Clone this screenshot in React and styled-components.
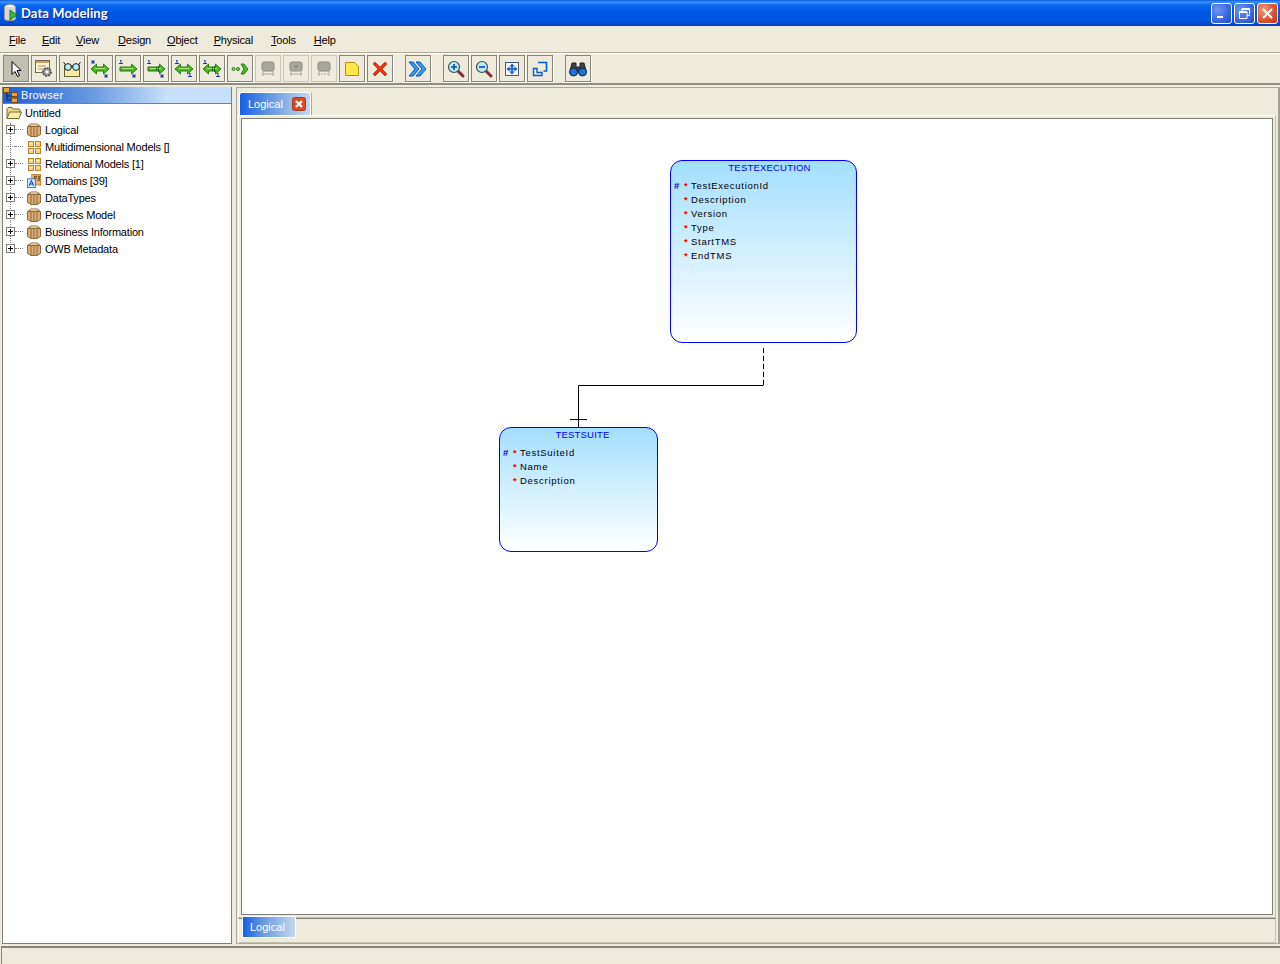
import React from 'react';
import styled, { createGlobalStyle } from 'styled-components';

const Global = createGlobalStyle`
  html, body { margin: 0; padding: 0; background: #efebdc; }
  * { box-sizing: border-box; }
`;

const Window = styled.div`
  width: 1280px;
  height: 964px;
  display: flex;
  flex-direction: column;
  overflow: hidden;
  background: #efebdc;
  font-family: "Liberation Sans", Arial, sans-serif;
  font-size: 11px;
  color: #000;
`;

const TitleBar = styled.div`
  height: 26px;
  flex: none;
  display: flex;
  align-items: center;
  padding: 0 2px 0 3px;
  background: linear-gradient(180deg, #0a5ae0 0, #3d95ff 2px, #0a66f0 5px, #0058e6 12px, #0055e0 20px, #0350d8 23px, #003cc0 26px);
`;

const TitleText = styled.span`
  margin-left: 2px;
  flex: 1;
  color: #fff;
  font-family: "Lato", sans-serif;
  font-weight: bold;
  font-size: 13px;
  letter-spacing: 0.1px;
  text-shadow: 1px 1px 0 #0f2a90;
`;

const CaptionButton = styled.div`
  width: 21px;
  height: 21px;
  margin-left: 2px;
  border: 1px solid #fff;
  border-radius: 3px;
  display: flex;
  align-items: center;
  justify-content: center;
  background: ${p => p.$close
    ? 'radial-gradient(circle at 30% 30%, #f09a80, #d8502c 60%, #c23a18)'
    : 'radial-gradient(circle at 30% 30%, #6f94f0, #3a66e0 60%, #2148c8)'};
`;

const MenuBar = styled.div`
  height: 27px;
  flex: none;
  display: flex;
  align-items: center;
  padding: 2px 0 0 9px;
  border-bottom: 1px solid #aca899;
  font-size: 11px;
  letter-spacing: -0.2px;
`;

const MenuItem = styled.span`
  margin-right: ${p => p.$gap}px;
  u { text-decoration: underline; }
`;

const ToolBar = styled.div`
  height: 32px;
  flex: none;
  display: flex;
  align-items: flex-start;
  padding: 1px 0 0 3px;
  border-bottom: 2px solid #8f8d80;
  border-top: 1px solid #fff;
`;

const ToolButton = styled.div`
  width: 26px;
  height: 27px;
  margin-right: 2px;
  margin-left: ${p => p.$space || 0}px;
  display: flex;
  align-items: center;
  justify-content: center;
  border: 1px solid ${p => (p.$off ? '#c9c7b8' : '#86867c')};
  box-shadow: 1px 1px 0 ${p => (p.$off ? 'transparent' : '#fff')};
  background: ${p => (p.$on ? '#c2c0b2' : 'transparent')};
`;

const Main = styled.div`
  flex: 1;
  min-height: 0;
  display: flex;
  padding: 2px 0 2px 2px;
`;

const Sidebar = styled.div`
  width: 230px;
  flex: none;
  display: flex;
  flex-direction: column;
  border: 1px solid #808078;
  border-width: 0 1px 1px 1px;
  background: #fff;
`;

const SidebarHead = styled.div`
  height: 17px;
  flex: none;
  display: flex;
  align-items: center;
  gap: 2px;
  color: #fff;
  background: linear-gradient(90deg, #1c5fd8 0, #6b9ce0 40%, #c6e0fb 72%, #c6e0fb 100%);
  border-bottom: 1px solid #808078;
  font-size: 11px;
  letter-spacing: 0.3px;
`;

const Tree = styled.div`
  position: relative;
  flex: 1;
  letter-spacing: -0.2px;
  &::before {
    content: '';
    position: absolute;
    left: 7px;
    top: 19px;
    height: 128px;
    border-left: 1px dotted #808080;
  }
`;

const RootRow = styled.div`
  height: 17px;
  display: flex;
  align-items: center;
  gap: 3px;
  padding-left: 3px;
`;

const TreeRow = styled.div`
  position: relative;
  height: 17px;
  display: flex;
  align-items: center;
  padding-left: 3px;
`;

const Expander = styled.span`
  width: 9px;
  height: 9px;
  flex: none;
  position: relative;
  z-index: 1;
  border: 1px solid #808080;
  background: #fff;
  &::before { content: ''; position: absolute; left: 1px; top: 3px; width: 5px; height: 1px; background: #000; }
  &::after { content: ''; position: absolute; left: 3px; top: 1px; width: 1px; height: 5px; background: #000; }
`;

const LeafDots = styled.span`
  width: 9px;
  flex: none;
  border-top: 1px dotted #808080;
`;

const Dots = styled.span`
  width: 8px;
  flex: none;
  margin-right: 4px;
  border-top: 1px dotted #808080;
`;

const IconSlot = styled.span`
  width: 14px;
  height: 16px;
  flex: none;
  display: flex;
  align-items: center;
  justify-content: center;
`;

const Label = styled.span`
  margin-left: 4px;
  white-space: nowrap;
`;

const Splitter = styled.div`
  width: 4px;
  flex: none;
`;

const Editor = styled.div`
  flex: 1;
  min-width: 0;
  display: flex;
  flex-direction: column;
  border: 1px solid #aca899;
  border-right: 2px solid #a0a094;
  padding-top: 4px;
`;

const TabStrip = styled.div`
  height: 23px;
  flex: none;
  padding-left: 2px;
  display: flex;
`;

const TopTab = styled.div`
  width: 72px;
  height: 23px;
  display: flex;
  align-items: center;
  justify-content: space-between;
  padding: 0 4px 0 8px;
  color: #fff;
  font-size: 11px;
  border-radius: 3px 3px 0 0;
  border: 1px solid #fff;
  border-bottom: 0;
  box-shadow: 1px 0 0 #aca899;
  background: linear-gradient(90deg, #1560e4 0, #6a9be0 45%, #c4d8ee 100%);
`;

const Pane = styled.div`
  flex: 1;
  min-height: 0;
  margin: 0 2px 0 1px;
  padding: 2px;
  border: 1px solid #c4c2b2;
  border-top-color: #fff;
  border-left-color: #fff;
  display: flex;
`;

const Canvas = styled.div`
  position: relative;
  flex: 1;
  background: #fff;
  border: 1px solid #808078;
`;

const Link = styled.svg`
  position: absolute;
  left: 0;
  top: 0;
  width: 100%;
  height: 100%;
  pointer-events: none;
`;

const Entity = styled.div`
  position: absolute;
  left: ${p => p.$x}px;
  top: ${p => p.$y}px;
  width: ${p => p.$w}px;
  height: ${p => p.$h}px;
  border: 1px solid #0000ff;
  border-radius: 12px;
  background: linear-gradient(180deg, #a3dfff 0, #ffffff 100%);
  font-family: "Liberation Sans", Arial, sans-serif;
  font-size: 9.5px;
  letter-spacing: 0.72px;
`;

const EntityName = styled.div`
  color: #0000ff;
  height: 14px;
  line-height: 14px;
  letter-spacing: 0.2px;
  margin: 0 0 4px ${p => p.$shift}px;
  text-align: center;
`;

const Attr = styled.div`
  height: 14px;
  line-height: 14px;
  display: flex;
  padding-left: 3px;
  white-space: nowrap;
`;

const Hash = styled.span`
  width: 10px;
  color: #0000cc;
  font-weight: bold;
  visibility: ${p => (p.$show ? 'visible' : 'hidden')};
`;

const Star = styled.span`
  width: 7px;
  color: #ff0000;
  font-weight: bold;
`;

const BottomStrip = styled.div`
  height: 25px;
  flex: none;
  margin: 0 2px 0 1px;
  padding: 0 0 0 4px;
  border: 1px solid #c4c2b2;
  border-top: 1px solid #808078;
  border-left-color: #fff;
`;

const BottomTab = styled.div`
  width: 52px;
  height: 20px;
  margin-top: -2px;
  padding-left: 7px;
  display: flex;
  align-items: center;
  color: #fff;
  font-size: 11px;
  outline: 1px solid #fff;
  box-shadow: 2px 2px 0 -1px #aca899;
  background: linear-gradient(90deg, #1560e4 0, #6a9be0 40%, #c4d8ee 100%);
`;

const StatusBar = styled.div`
  height: 18px;
  flex: none;
  margin-left: 1px;
  border-top: 2px solid #85857a;
  border-left: 1px solid #85857a;
`;

const Box = () => (
  <svg width="14" height="14" viewBox="0 0 14 14">
    <path d="M.5 3.5 4 1h6l3.5 2.5v8L10 13.5H4L.5 11.5z" fill="#dcae74" stroke="#8d6b3e" />
    <path d="M4 3v10.5M7 3v10.5M10 3v10.5" stroke="#8d6b3e" fill="none" />
    <path d="M1 3.5h12" stroke="#8d6b3e" />
    <path d="M4 2h6" stroke="#f6e2bc" />
  </svg>
);

const Grid = () => (
  <svg width="14" height="14" viewBox="0 0 14 14">
    <g fill="#fbd07e" stroke="#bd8428">
      <rect x="1.5" y="1.5" width="5" height="5" />
      <rect x="8.5" y="1.5" width="5" height="5" />
      <rect x="1.5" y="8.5" width="5" height="5" />
      <rect x="8.5" y="8.5" width="5" height="5" />
    </g>
    <path d="M2.5 3.5h3M9.5 3.5h3M2.5 10.5h3M9.5 10.5h3" stroke="#fff0c8" />
  </svg>
);

const Domain = () => (
  <svg width="16" height="16" viewBox="0 0 16 16">
    <rect x="5.5" y="0.5" width="10" height="12" fill="#f6b26b" stroke="#b87a30" />
    <path d="M8.5 2.5h2v3h-2zM12 2.5h2v5h-2M12 5h2" fill="none" stroke="#553300" />
    <rect x="0.5" y="5.5" width="9" height="10" fill="#d6ecff" stroke="#2a70c8" />
    <path d="M2.5 13.5 5 7.5l2.5 6M3.5 11.5h3" fill="none" stroke="#0a4fc0" strokeWidth="1.2" />
  </svg>
);

const Folder = () => (
  <svg width="16" height="14" viewBox="0 0 16 14">
    <path d="M1 12.5V2.5L2 1.5h4l1 1.5h6l1 1v2" fill="#e8dc98" stroke="#7a6a20" />
    <path d="M1 12.5 3.5 6h12l-2.5 6.5z" fill="#f5eeb0" stroke="#7a6a20" />
  </svg>
);

const BrowserIcon = () => (
  <svg width="16" height="16" viewBox="0 0 16 16">
    <path d="M4 5v8h4M4 9h4" stroke="#222" fill="none" />
    <rect x="0.5" y="0.5" width="6" height="5" fill="#e8a040" stroke="#7a4a10" />
    <rect x="8.5" y="5.5" width="6" height="4" fill="#e8a040" stroke="#7a4a10" />
    <rect x="8.5" y="11" width="6" height="4.5" fill="#e8a040" stroke="#7a4a10" />
  </svg>
);

const AppIcon = () => (
  <svg width="16" height="20" viewBox="0 0 16 20">
    <ellipse cx="7" cy="4" rx="5.5" ry="2.5" fill="#f2f2f2" stroke="#9a9a9a" />
    <path d="M1.5 4v12c0 2 11 2 11 0V4" fill="#d8d8d8" stroke="#9a9a9a" />
    <path d="M7 7l7 5-7 5z" fill="#3cb83c" stroke="#1c7a1c" />
  </svg>
);

const Pointer = () => (
  <svg width="18" height="18" viewBox="0 0 18 18">
    <path d="M5 1.5v13l3-3 2.5 5 2-1-2.5-5H14z" fill="#fff" stroke="#000" />
  </svg>
);

const Props = () => (
  <svg width="20" height="20" viewBox="0 0 20 20">
    <rect x="1.5" y="1.5" width="14" height="12" fill="#fff4d0" stroke="#6a6a5a" />
    <path d="M2 2h13v2H2z" fill="#c8a060" />
    <path d="M4 7h8M4 10h5" stroke="#a09870" />
    <circle cx="13" cy="13" r="4" fill="#a0a0a0" stroke="#444" strokeWidth="1.6" strokeDasharray="2 1" />
    <circle cx="13" cy="13" r="1.4" fill="#fff" />
  </svg>
);

const Glasses = () => (
  <svg width="20" height="20" viewBox="0 0 20 20">
    <rect x="2.5" y="6.5" width="15" height="11" fill="#fbe9a8" stroke="#6a6030" />
    <path d="M1.5 3l2 3M18.5 3l-2 3" stroke="#222" />
    <circle cx="6" cy="8" r="3.4" fill="#bfe8f0" stroke="#222" />
    <circle cx="14" cy="8" r="3.4" fill="#bfe8f0" stroke="#222" />
    <path d="M9 8h2" stroke="#222" />
  </svg>
);

const Mark = ({ x, y, one }) => (one
  ? <path d={`M${x - 1} ${y + 1}l1-1v3M${x - 2} ${y + 3.5}h4`} stroke="#1c3c9c" fill="none" />
  : <path d={`M${x - 2} ${y}h4M${x} ${y - 2}v4M${x - 1.5} ${y - 1.5}l3 3M${x + 1.5} ${y - 1.5}l-3 3`} stroke="#1c3c9c" fill="none" strokeWidth="0.9" />);

const Rel = ({ from, to, left, line }) => (
  <svg width="22" height="22" viewBox="0 0 22 22">
    <Mark x={4} y={from === 'one' ? 2 : 4} one={from === 'one'} />
    <Mark x={17} y={to === 'one' ? 15 : 18} one={to === 'one'} />
    <path d={left
      ? 'M2 11l5.5-5v3h7V6l5.5 5-5.5 5v-3h-7v3z'
      : 'M3 9h11.5V6l5.5 5-5.5 5v-3H3z'} fill="#4fb822" stroke="#2a7a1a" />
    <path d={left ? 'M6 10.5h10' : 'M5 10.5h11'} stroke="#a8e878" />
    {line && <path d="M13.5 8v6M11.5 9v4" stroke="#1f6a14" />}
  </svg>
);

const Dotted = () => (
  <svg width="20" height="20" viewBox="0 0 20 20">
    <circle cx="3.5" cy="10" r="1.5" fill="#9adf60" stroke="#2a7a1a" />
    <circle cx="8" cy="10" r="1.5" fill="#9adf60" stroke="#2a7a1a" />
    <path d="M11 5h3l4 5-4 5h-3l3-5z" fill="#4fb822" stroke="#2a7a1a" />
  </svg>
);

const TableIcon = ({ plus, dash }) => (
  <svg width="20" height="20" viewBox="0 0 20 20">
    <rect x="4" y="3" width="12" height="9" rx="2" fill="#a8a89e" stroke="#8a8a80" />
    <path d="M5 12v5M15 12v5M4 15h12" stroke="#a8a89e" fill="none" strokeDasharray={dash ? '2 1' : undefined} />
    {plus && <path d="M10 5v5M7.5 7.5h5" stroke="#84847c" />}
  </svg>
);

const Note = () => (
  <svg width="18" height="18" viewBox="0 0 18 18">
    <path d="M2.5 2.5h9l4 4v9h-13z" fill="#ffe84c" stroke="#b88c10" />
    <path d="M11.5 2.5l4 4" fill="none" stroke="#b88c10" />
  </svg>
);

const Cross = () => (
  <svg width="18" height="18" viewBox="0 0 18 18">
    <path d="M4 2l5 5 5-5 2 2-5 5 5 5-2 2-5-5-5 5-2-2 5-5-5-5z" fill="#f0300c" stroke="#a81c08" strokeWidth="0.6" />
  </svg>
);

const Chevrons = () => (
  <svg width="20" height="20" viewBox="0 0 20 20">
    <path d="M1 3h4l6 7-6 7H1l6-7z" fill="#3a9cf0" stroke="#0a50b8" />
    <path d="M8 3h4l6 7-6 7H8l6-7z" fill="#3a9cf0" stroke="#0a50b8" />
  </svg>
);

const Lens = ({ sign }) => (
  <svg width="20" height="20" viewBox="0 0 20 20">
    <path d="M12 12l5 5" stroke="#8c2c3c" strokeWidth="3" strokeLinecap="round" />
    <circle cx="8" cy="8" r="5.5" fill="#b8ecf0" stroke="#3c4c50" strokeWidth="1.2" />
    <path d={sign === 'plus' ? 'M5 8h6M8 5v6' : 'M5 8h6'} stroke="#0a48c0" strokeWidth="1.6" />
  </svg>
);

const FitIcon = () => (
  <svg width="20" height="20" viewBox="0 0 20 20">
    <rect x="3.5" y="3.5" width="13" height="13" fill="#f4f4f4" stroke="#4a5a70" />
    <path d="M10 7v6M7 10h6" stroke="#0a58d8" strokeWidth="1.6" />
    <path d="M10 4.5l2.5 3h-5zM10 15.5l2.5-3h-5zM4.5 10l3-2.5v5zM15.5 10l-3-2.5v5z" fill="#0a58d8" />
  </svg>
);

const Resize = () => (
  <svg width="20" height="20" viewBox="0 0 20 20">
    <path d="M8 3.5h8.5V12h-3" fill="none" stroke="#0a58d8" strokeWidth="1.6" />
    <path d="M3.5 9.5v7H12v-3H7v-4z" fill="none" stroke="#0a58d8" strokeWidth="1.4" />
  </svg>
);

const Binoculars = () => (
  <svg width="20" height="20" viewBox="0 0 20 20">
    <path d="M4 4h4v4h4V4h4l2 8H2z" fill="#3c4450" stroke="#1c2028" />
    <circle cx="5.5" cy="13" r="4" fill="#1c70e0" stroke="#1c2028" />
    <circle cx="14.5" cy="13" r="4" fill="#1c70e0" stroke="#1c2028" />
  </svg>
);

const CloseTab = () => (
  <svg width="14" height="14" viewBox="0 0 14 14">
    <rect x="0.5" y="0.5" width="13" height="13" rx="2" fill="#d84a28" stroke="#a83818" />
    <path d="M4 4l6 6M10 4l-6 6" stroke="#fff" strokeWidth="2.2" />
  </svg>
);

const menus = [
  ['F', 'ile', 16], ['E', 'dit', 16], ['V', 'iew', 19], ['D', 'esign', 16],
  ['O', 'bject', 16], ['P', 'hysical', 18], ['T', 'ools', 18], ['H', 'elp', 0],
];

const tree = [
  ['Logical', <Box />], ['Multidimensional Models []', <Grid />, true],
  ['Relational Models [1]', <Grid />], ['Domains [39]', <Domain />],
  ['DataTypes', <Box />], ['Process Model', <Box />],
  ['Business Information', <Box />], ['OWB Metadata', <Box />],
];

const tools = [
  { icon: <Pointer />, on: true }, { icon: <Props /> }, { icon: <Glasses /> },
  { icon: <Rel left /> }, { icon: <Rel from="one" /> }, { icon: <Rel from="one" line /> },
  { icon: <Rel left from="one" to="one" /> }, { icon: <Rel left from="one" to="one" line /> },
  { icon: <Dotted /> },
  { icon: <TableIcon />, off: true }, { icon: <TableIcon plus />, off: true }, { icon: <TableIcon dash />, off: true },
  { icon: <Note /> }, { icon: <Cross /> },
  { icon: <Chevrons />, space: 10 },
  { icon: <Lens sign="plus" />, space: 10 }, { icon: <Lens /> }, { icon: <FitIcon /> }, { icon: <Resize /> },
  { icon: <Binoculars />, space: 10 },
];

const EntityBox = ({ name, attrs, shift, ...pos }) => (
  <Entity {...pos}>
    <EntityName $shift={shift}>{name}</EntityName>
    {attrs.map((a, i) => (
      <Attr key={a}>
        <Hash $show={i === 0}>#</Hash>
        <Star>*</Star>
        <span>{a}</span>
      </Attr>
    ))}
  </Entity>
);

export default function App() {
  return (
    <Window>
      <Global />
      <TitleBar>
        <AppIcon />
        <TitleText>Data Modeling</TitleText>
        <CaptionButton>
          <svg width="11" height="11" viewBox="0 0 11 11"><path d="M1 8h6v2H1z" fill="#fff" /></svg>
        </CaptionButton>
        <CaptionButton>
          <svg width="13" height="13" viewBox="0 0 13 13">
            <path d="M4 1.5h7.5v7H9M4 1.5V4M4 2.5h7.5" fill="none" stroke="#fff" />
            <path d="M1.5 4.5h7.5v7H1.5zM1.5 5.5h7.5" fill="none" stroke="#fff" />
          </svg>
        </CaptionButton>
        <CaptionButton $close>
          <svg width="13" height="13" viewBox="0 0 13 13"><path d="M2 2l9 9M11 2l-9 9" stroke="#fff" strokeWidth="2" /></svg>
        </CaptionButton>
      </TitleBar>
      <MenuBar>
        {menus.map(([k, rest, gap]) => (
          <MenuItem key={k} $gap={gap}><u>{k}</u>{rest}</MenuItem>
        ))}
      </MenuBar>
      <ToolBar>
        {tools.map((t, i) => (
          <ToolButton key={i} $on={t.on} $off={t.off} $space={t.space}>{t.icon}</ToolButton>
        ))}
      </ToolBar>
      <Main>
        <Sidebar>
          <SidebarHead><BrowserIcon />Browser</SidebarHead>
          <Tree>
            <RootRow><Folder />Untitled</RootRow>
            {tree.map(([label, icon, leaf]) => (
              <TreeRow key={label}>
                {leaf ? <LeafDots /> : <Expander />}
                <Dots />
                <IconSlot>{icon}</IconSlot>
                <Label>{label}</Label>
              </TreeRow>
            ))}
          </Tree>
        </Sidebar>
        <Splitter />
        <Editor>
          <TabStrip>
            <TopTab>Logical<CloseTab /></TopTab>
          </TabStrip>
          <Pane>
            <Canvas>
              <Link>
                <path d="M521.5 229v37" fill="none" stroke="#000" strokeDasharray="5 3" />
                <path d="M521.5 266.5H336.5V308M328 300.5h17" fill="none" stroke="#000" />
              </Link>
              <EntityBox
                name="TESTEXECUTION"
                shift={12}
                $x={428}
                $y={41}
                $w={187}
                $h={183}
                attrs={['TestExecutionId', 'Description', 'Version', 'Type', 'StartTMS', 'EndTMS']}
              />
              <EntityBox
                name="TESTSUITE"
                shift={8}
                $x={257}
                $y={308}
                $w={159}
                $h={125}
                attrs={['TestSuiteId', 'Name', 'Description']}
              />
            </Canvas>
          </Pane>
          <BottomStrip>
            <BottomTab>Logical</BottomTab>
          </BottomStrip>
        </Editor>
      </Main>
      <StatusBar />
    </Window>
  );
}
